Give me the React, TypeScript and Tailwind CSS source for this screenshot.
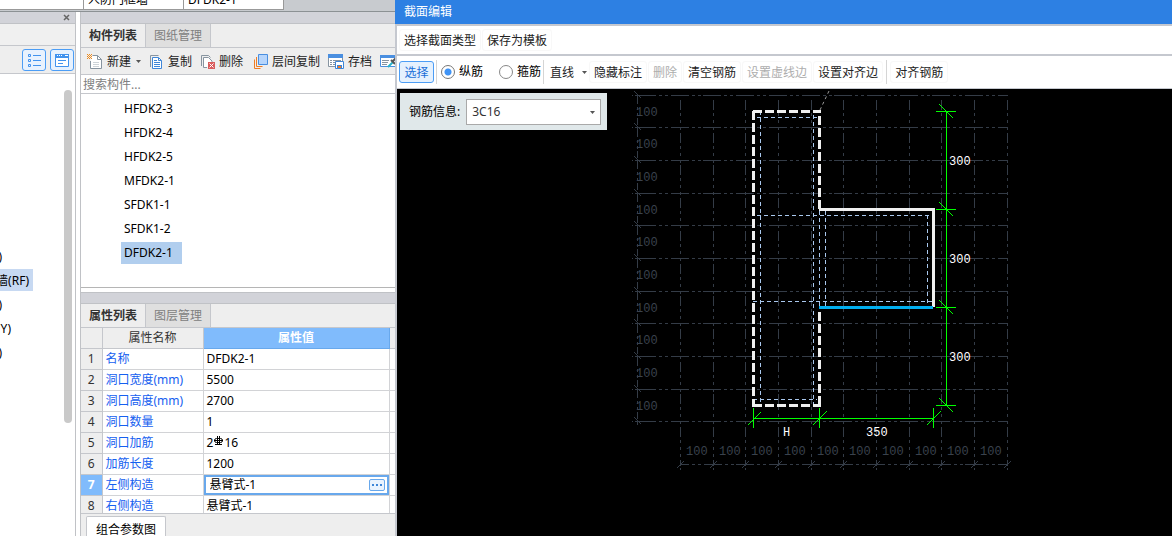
import clsx from 'clsx';
import type { ReactNode } from 'react';

const components = ['HFDK2-3', 'HFDK2-4', 'HFDK2-5', 'MFDK2-1', 'SFDK1-1', 'SFDK1-2', 'DFDK2-1'];

const floors = [
  { label: ')', active: false },
  { label: '墙(RF)', active: true },
  { label: ')', active: false },
  { label: 'Y)', active: false },
  { label: ')', active: false },
];

const properties = [
  { id: 1, name: '名称', value: 'DFDK2-1' },
  { id: 2, name: '洞口宽度(mm)', value: '5500' },
  { id: 3, name: '洞口高度(mm)', value: '2700' },
  { id: 4, name: '洞口数量', value: '1' },
  { id: 5, name: '洞口加筋', value: '2C16' },
  { id: 6, name: '加筋长度', value: '1200' },
  { id: 7, name: '左侧构造', value: '悬臂式-1' },
  { id: 8, name: '右侧构造', value: '悬臂式-1' },
];

const ACTIVE_ROW = 7;

// grid line positions in drawing coordinates
const gridX = [680, 713, 745, 778, 811, 843, 876, 909, 941, 974, 1007];
const gridY = [95, 127, 160, 193, 225, 258, 291, 323, 356, 389, 421];

const NewIcon = () => (
  <svg width="16" height="16" viewBox="0 0 16 16" fill="none">
    <path d="M5.500 1.500h5l4 4v9h-11V7" fill="#fff" stroke="#8794a0" />
    <path d="M10.500 1.500v4h4" stroke="#8794a0" />
    <path d="M6 8.500h6M6 10.500h6M6 12.500h6" stroke="#cdd3d8" />
    <path d="M0 0h1v1H0zM2 0h1v1H2zM4 0h1v1H4zM1 1h1v1H1zM3 1h1v1H3zM0 2h1v1H0zM2 2h1v1H2zM4 2h1v1H4zM1 3h1v1H1zM3 3h1v1H3zM0 4h1v1H0zM2 4h1v1H2zM4 4h1v1H4z" fill="#ee8a1c" />
  </svg>
);

const CopyIcon = () => (
  <svg width="15" height="16" viewBox="0 0 15 16" fill="none">
    <path d="M1.500 13V1.500h8" stroke="#8794a0" />
    <path d="M3.500 3.500h6l3 3v8h-9z" fill="#fff" stroke="#3f86d8" />
    <path d="M9.500 3.500v3h3M5 6.500h3M5 8.500h6M5 10.500h6M5 12.500h6" stroke="#3f86d8" />
  </svg>
);

const DeleteIcon = () => (
  <svg width="15" height="16" viewBox="0 0 15 16" fill="none">
    <path d="M1.500 12V1.500h7l2 2" stroke="#8794a0" />
    <path d="M7 13.500H3.500v-10h5l3.500 3.500V8" fill="#fff" stroke="#8794a0" />
    <path d="M8 8h7v7H8z" fill="#d95c5c" />
    <path d="M9.500 9.500l4 4m0-4l-4 4" stroke="#fff" />
  </svg>
);

const LayerCopyIcon = () => (
  <svg width="17" height="16" viewBox="-2 0 17 16" fill="none">
    <path d="M1.500 5.500v9h6M3.500 3v9.500h6" stroke="#ee7c25" />
    <path d="M5.500.5h9v10h-9z" fill="#b7d5fb" stroke="#4a8fe0" />
  </svg>
);

const ArchiveIcon = () => (
  <svg width="16" height="16" viewBox="0 0 16 16" fill="none">
    <path d="M.5 1.500h14v11H.5z" fill="#fff" stroke="#8794a0" />
    <path d="M0 0h15v4H0z" fill="#4a8fe0" />
    <path d="M2 6.500h2M5 6.500h8M2 8.500h2M5 8.500h3M2 10.500h2M5 10.500h3" stroke="#8794a0" />
    <path d="M7.500 7.500h8v7h-8z" fill="#fff" stroke="#3f86d8" />
    <path d="M9 11h5v4H9z" fill="#3f86d8" />
    <path d="M10 12h3v2h-3z" fill="#ee7c25" />
  </svg>
);

const ExtractIcon = () => (
  <svg width="16" height="16" viewBox="0 0 16 16" fill="none">
    <path d="M.5 1.500h15v11H.5z" fill="#fff" stroke="#4a8fe0" />
    <path d="M0 1h16v3H0z" fill="#4a8fe0" />
    <path d="M2 6.500h7M2 8.500h6M2 10.500h5" stroke="#8794a0" />
    <path d="M8 13l5-5" stroke="#29b3c9" strokeWidth="2" />
    <path d="M11 6l4 4M13 7l3-3" stroke="#555" strokeWidth="2" />
  </svg>
);

const Caret = ({ className }: { className?: string }) => (
  <svg width="5" height="3" viewBox="0 0 5 3" className={className}>
    <path d="M0 0h5L2.500 3z" fill="#555" />
  </svg>
);

const RebarMark = () => (
  <svg width="9" height="10" viewBox="0 0 9 10" fill="none" stroke="#000" className="mx-px inline-block align-[1px]">
    <rect x=".5" y="2.500" width="8" height="4" rx="2" />
    <path d="M3.500 0v9M5.500 0v9M0 4.500h9M1 8.500h7" shapeRendering="crispEdges" />
  </svg>
);

const ToolButton = ({ icon, children }: { icon: ReactNode; children?: ReactNode }) => (
  <button className="flex shrink-0 items-center gap-1 whitespace-nowrap">
    {icon}
    {children}
  </button>
);

const PanelTabs = ({ active, other }: { active: string; other: string }) => (
  <div className="flex h-6 shrink-0 border-b border-[#c5c7cc] bg-[#eeeeee] leading-[23px]">
    <button className="w-[65px] border-r border-[#c5c7cc] font-bold text-[#333]">{active}</button>
    <button className="w-[65px] border-r border-[#c5c7cc] bg-[#dfdfdf] text-[#808080]">{other}</button>
  </div>
);

const FloorPanel = () => (
  <div className="flex w-[76px] shrink-0 flex-col border-r border-[#c0c2c6] bg-white">
    <div className="flex h-3 justify-end border-b border-[#c0c2c6] bg-[#d2d3d9] pr-[5px]">
      <button aria-label="关闭">
        <svg width="7" height="7" viewBox="0 0 7 7" stroke="#666" strokeWidth="1.500">
          <path d="M1 1l5 5M6 1L1 6" />
        </svg>
      </button>
    </div>
    <div className="h-[22px] shrink-0 border-b border-[#c5c7cc] bg-[#f0f0f0]" />
    <div className="flex h-7 shrink-0 items-center justify-end gap-1 border-b border-[#c5c7cc] bg-[#eeeeee] pr-px">
      <button aria-label="列表" className="flex h-[22px] w-6 items-center justify-center rounded-[3px] border border-[#4c9df5] bg-[#e8f2fe]">
        <svg width="14" height="14" viewBox="0 0 14 14" fill="none" stroke="#4293ee">
          <path d="M1.500 1.500h2v2h-2zM1.500 6.500h2v2h-2zM1.500 11.500h2v2h-2z" />
          <path d="M6 2.500h8M6 7.500h8M6 12.500h8" />
        </svg>
      </button>
      <button aria-label="窗口" className="flex h-[22px] w-6 items-center justify-center rounded-[3px] border border-[#4c9df5] bg-[#e8f2fe]">
        <svg width="16" height="14" viewBox="0 0 16 14" fill="none">
          <path d="M1.500 1.500h13v12h-13z" fill="#fff" stroke="#4293ee" />
          <path d="M1 1h14v4H1z" fill="#4293ee" />
          <path d="M3 2.500h1M5 2.500h1M7 2.500h1M11 2.500h3" stroke="#fff" />
          <path d="M4 7.500h8M4 10.500h5" stroke="#4293ee" />
        </svg>
      </button>
    </div>
    <div className="flex flex-1 justify-between">
      <ul className="mt-[171px] space-y-0.5">
        {floors.map((floor, index) => (
          <li
            key={index}
            className={clsx(
              'flex h-[22px] items-center justify-end whitespace-nowrap pt-0.5',
              floor.active && 'w-[33px] bg-[#c7d9f2] pr-1',
              floor.label === 'Y)' && 'w-[11px]',
              floor.label === ')' && 'w-0.5',
            )}
          >
            {floor.label}
          </li>
        ))}
      </ul>
      <div className="mr-[3px] mt-4 h-[333px] w-2 rounded-full bg-[#c9c9c9]" />
    </div>
  </div>
);

const PropertyTable = () => (
  <table className="w-full table-fixed border-collapse text-left">
    <thead>
      <tr className="h-5 text-[#333]">
        <th className="w-[21px] border-b border-r border-[#c5c7cc] bg-[#eeeeee]" />
        <th className="w-[101px] border-b border-r border-[#c5c7cc] bg-[#eeeeee] p-0 text-center font-normal">属性名称</th>
        <th className="border border-t-0 border-[#68a8ec] bg-[#80bbfc] p-0 text-center font-bold text-white">属性值</th>
        <th className="w-1.5 border-b border-[#c5c7cc] bg-[#eeeeee]" />
      </tr>
    </thead>
    <tbody>
      {properties.map((row) => {
        const active = row.id === ACTIVE_ROW;
        return (
          <tr key={row.id} className="h-[21px]">
            <th className={clsx('border-b border-r border-[#c5c7cc] p-0 text-center', active ? 'bg-[#80bbfc] font-bold text-white' : 'bg-[#eeeeee] font-normal text-[#333]')}>{row.id}</th>
            <td className="border-b border-r border-[#d2d3d6] p-0 pl-[3px] text-[#1560f0]">{row.name}</td>
            <td className={clsx('border-b border-r border-[#d2d3d6] p-0', !active && 'pl-[3px]')}>
              {active ? (
                <div className="flex h-5 items-center border-2 border-[#68a8ec] pl-1 pr-0.5">
                  <input aria-label={row.name} defaultValue={row.value} className="min-w-0 flex-1 outline-none" />
                  <button aria-label="更多" className="flex h-3 w-4 items-center justify-center rounded-[2px] border border-[#68a8ec] bg-[#eaf3fe]">
                    <svg width="10" height="2" viewBox="0 0 10 2" fill="#3f86d8">
                      <path d="M0 0h2v2H0zM4 0h2v2H4zM8 0h2v2H8z" />
                    </svg>
                  </button>
                </div>
              ) : row.id === 5 ? (
                <>
                  2<RebarMark />16
                </>
              ) : (
                row.value
              )}
            </td>
            <td className="border-b border-[#d2d3d6] p-0" />
          </tr>
        );
      })}
    </tbody>
  </table>
);

const ComponentPanel = () => (
  <div className="ml-1 flex min-w-0 flex-1 flex-col border-l border-[#c0c2c6] bg-white">
    <div className="h-3 shrink-0 border-b border-[#c0c2c6] bg-[#d2d3d9]" />
    <PanelTabs active="构件列表" other="图纸管理" />
    <div className="flex h-[27px] shrink-0 items-center gap-2 overflow-hidden border-b border-[#c5c7cc] bg-[#eeeeee] pl-1.5 pt-px text-[#222]">
      <ToolButton icon={<NewIcon />}>
        新建
        <Caret className="ml-px" />
      </ToolButton>
      <ToolButton icon={<CopyIcon />}>复制</ToolButton>
      <ToolButton icon={<DeleteIcon />}>删除</ToolButton>
      <ToolButton icon={<LayerCopyIcon />}>层间复制</ToolButton>
      <ToolButton icon={<ArchiveIcon />}>存档</ToolButton>
      <ToolButton icon={<ExtractIcon />} />
    </div>
    <input aria-label="搜索构件" placeholder="搜索构件..." className="h-[19px] shrink-0 border-b border-[#c5c7cc] pl-0.5 outline-none placeholder:text-[#808080]" />
    <ul className="h-[194px] shrink-0 space-y-0.5 border-b border-[#b5b5b5] pl-10 pt-1">
      {components.map((name) => (
        <li key={name} className={clsx('h-[22px] w-[61px] pl-[3px] leading-[22px]', name === 'DFDK2-1' && 'bg-[#b1ceee]')}>
          {name}
        </li>
      ))}
    </ul>
    <div className="mt-1 h-3 shrink-0 border-y border-[#c0c2c6] bg-[#d2d3d9]" />
    <PanelTabs active="属性列表" other="图层管理" />
    <div className="min-h-0 flex-1 overflow-hidden">
      <PropertyTable />
    </div>
    <div className="flex h-[23px] shrink-0 items-end border-t border-[#c5c7cc] bg-[#eeeeee] pl-[5px]">
      <button className="h-5 w-20 rounded-t-[2px] border border-b-0 border-[#c5c7cc] bg-white pt-1 leading-[18px]">组合参数图</button>
    </div>
  </div>
);

const ActionButton = ({ children, disabled }: { children: ReactNode; disabled?: boolean }) => (
  <button disabled={disabled} className="h-[22px] shrink-0 rounded-[3px] border border-[#f8f8f8] px-1 pt-0.5 text-[#222] disabled:text-[#adadad]">
    {children}
  </button>
);

const Radio = ({ label, defaultChecked }: { label: string; defaultChecked?: boolean }) => (
  <label className="flex shrink-0 items-center gap-1">
    <input
      type="radio"
      name="rebar"
      defaultChecked={defaultChecked}
      className="size-3.5 appearance-none rounded-full border border-[#888] bg-white checked:border-[#777] checked:bg-[radial-gradient(circle,#3f93f5_3px,transparent_4px)]"
    />
    {label}
  </label>
);

const SectionDrawing = () => (
  <svg width="775" height="447" viewBox="397 89 775 447" fill="none" className="shrink-0">
    <g stroke="#343c47" shapeRendering="crispEdges">
      {gridX.map((x) => (
        <path key={x} d={`M${x + 0.5} 100V466`} strokeDasharray="10 3 3 4 3 4 3 2.700" />
      ))}
      {gridY.map((y) => (
        <path key={y} d={`M638 ${y + 0.5}H1008`} strokeDasharray="18 3 3 3 3 2.700" />
      ))}
      <path d="M637.500 95V425" strokeDasharray="9 3 3 3 3 2 7 2.700" />
      <path d="M680 464.500H1008" strokeDasharray="18 3 3 3 3 2.700" strokeDashoffset="9" />
    </g>
    <g stroke="#343c47">
      {gridY.map((y) => (
        <path key={y} d={`M634 ${y - 4}l7 7M632 ${y + 0.5}h1M635 ${y + 0.5}h3`} />
      ))}
      {gridX.map((x) => (
        <path key={x} d={`M${x - 3} 468l7-7M${x + 0.5} 468v2`} />
      ))}
    </g>
    <g fill="#3a424d" className="font-['Liberation_Mono'] text-[12px]">
      {gridY.slice(0, -1).map((y) => (
        <text key={y} x="636" y={y + 21}>100</text>
      ))}
      {gridX.slice(0, -1).map((x) => (
        <text key={x} x={x + 6} y="455">100</text>
      ))}
    </g>
    <path d="M820 110L829 91" stroke="#999" strokeDasharray="3 3" />
    <g stroke="#a9c8ee" strokeDasharray="4 3" shapeRendering="crispEdges">
      <path d="M757 117.500H819M760.500 111V403M813.500 115V405M757 215.500H933M753 301.500H933M753 399.500H817" />
      <path d="M819.500 211V307M825.500 211V307M927.500 215V307" />
    </g>
    <g stroke="#f0f0f0" strokeWidth="3" shapeRendering="crispEdges">
      <path d="M753 111.500H821M753 405.500H821M753.500 111V407M819.500 116V209M819.500 312V405" strokeDasharray="9 3" />
      <path d="M819 209.500H933.500V307" />
    </g>
    <path d="M819 307.500H933" stroke="#00aef0" strokeWidth="3" shapeRendering="crispEdges" />
    <g stroke="#00ff00" shapeRendering="crispEdges">
      <path d="M946.500 111V406M936 111.500h20M936 209.500h20M936 307.500h20M936 405.500h20" />
      <path d="M753 418.500H934M753.500 408v20M819.500 408v20M933.500 408v20" />
      <path d="M939 104l14 14M939 202l14 14M939 300l14 14M939 398l14 14M748 425l13-13M813 425l14-14M927 425l14-14" />
    </g>
    <g fill="#fff" className="font-['Liberation_Mono'] text-[12px]">
      <text x="949" y="165">300</text>
      <text x="949" y="263">300</text>
      <text x="949" y="361">300</text>
      <text x="783" y="436">H</text>
      <text x="866" y="436">350</text>
    </g>
  </svg>
);

const SectionEditor = () => (
  <div className="flex min-w-0 flex-1 flex-col">
    <header className="h-6 shrink-0 bg-[#2d80e3] pl-[9px] leading-[23px] text-white">截面编辑</header>
    <div className="flex min-h-0 flex-1 flex-col border-l-2 border-t-2 border-[#c5c8cf] bg-white">
      <div className="flex h-[30px] shrink-0 items-center gap-px border-b-2 border-[#c5c8cf] pl-0.5">
        <ActionButton>选择截面类型</ActionButton>
        <ActionButton>保存为模板</ActionButton>
      </div>
      <div className="flex h-[33px] shrink-0 items-center gap-px overflow-hidden whitespace-nowrap border-b border-[#c5c8cf] pl-0.5">
        <button className="h-[22px] w-[35px] shrink-0 rounded-[3px] border border-[#4c9df5] bg-[#e5f1fe] pt-px text-[#1a6fd8]">选择</button>
        <div className="ml-px flex h-6 shrink-0 items-center gap-4 border-x border-[#d5d5d5] pl-1 pr-0.5">
          <Radio label="纵筋" defaultChecked />
          <Radio label="箍筋" />
        </div>
        <button className="ml-[5px] mr-px flex shrink-0 items-center gap-2 pt-px text-[#222]">
          直线
          <Caret />
        </button>
        <ActionButton>隐藏标注</ActionButton>
        <ActionButton disabled>删除</ActionButton>
        <ActionButton>清空钢筋</ActionButton>
        <ActionButton disabled>设置虚线边</ActionButton>
        <ActionButton>设置对齐边</ActionButton>
        <div className="mx-0.5 h-6 w-px shrink-0 bg-[#d5d5d5]" />
        <ActionButton>对齐钢筋</ActionButton>
      </div>
      <div className="relative flex min-h-0 flex-1 overflow-hidden bg-black">
        <SectionDrawing />
        <div className="absolute left-[3px] top-1 flex h-[37px] w-[207px] items-center gap-1.5 bg-[#e0e8ea] pl-[9px] pr-1.5">
          <label htmlFor="rebar-info" className="shrink-0">钢筋信息:</label>
          <div className="relative flex-1">
            <select id="rebar-info" className="h-[26px] w-full appearance-none border border-[#a9a9a9] bg-white pl-[5px] text-[#333]">
              <option>3C16</option>
            </select>
            <Caret className="pointer-events-none absolute right-1.5 top-3" />
          </div>
        </div>
      </div>
    </div>
  </div>
);

const App = () => {
  return (
    <div className="flex h-screen overflow-hidden bg-white font-['Noto_Sans','Noto_Sans_CJK_SC',sans-serif] text-[12px] leading-[18px] text-black">
      <div className="flex w-[395px] shrink-0 flex-col">
        <div className="flex h-3 shrink-0 items-start overflow-hidden border-b border-[#8c9194] bg-[#c8cbcf]">
          <div className="h-2.5 w-[84px] border-b border-r border-[#999] bg-white" />
          <div className="flex h-2.5 w-[100px] items-end overflow-hidden border-b border-r border-[#999] bg-white pl-1">人防门框墙</div>
          <div className="flex h-2.5 w-[100px] items-end overflow-hidden border-b border-r border-[#999] bg-white pl-1">DFDK2-1</div>
        </div>
        <div className="flex min-h-0 flex-1">
          <FloorPanel />
          <ComponentPanel />
        </div>
      </div>
      <SectionEditor />
    </div>
  );
};

export default App;
